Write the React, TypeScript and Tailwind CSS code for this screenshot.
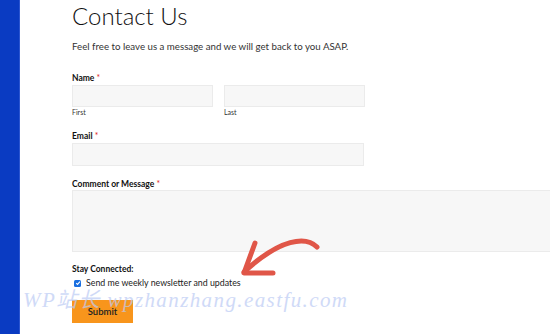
import React from 'react'

const font = { fontFamily: 'Lato, "Open Sans", "Liberation Sans", sans-serif' }

const Label = ({ text, req }: { text: string; req?: boolean }) => (
  <div className="text-[8.5px] font-bold text-[#111] leading-[12px]">
    {text}
    {req && <span className="text-[#e02424] font-normal"> *</span>}
  </div>
)

const Box = ({ w, h }: { w: string; h: string }) => (
  <div className={`${w} ${h} bg-[#f7f7f7] border border-[#ebebeb]`} />
)

const Arrow = () => (
  <svg className="absolute left-[236px] top-[232px]" width="90" height="48" viewBox="0 0 90 48" fill="none">
    <path d="M81 15 C 70 4, 45 6, 8 40" stroke="#e05648" strokeWidth="5" strokeLinecap="round" />
    <path d="M19 11 L 8 41 L 37 41" stroke="#e05648" strokeWidth="5" strokeLinecap="round" strokeLinejoin="round" />
  </svg>
)

export default function App() {
  return (
    <div className="relative flex w-[550px] h-[334px] overflow-hidden bg-white" style={font}>
      <div className="w-[20px] shrink-0 bg-[#0a3bc2] border-r border-[#2b55d0]" />
      <div className="flex flex-col pl-[52px] text-[#222]">
        <h1 className="text-[24px] leading-[30px] mt-[1px] font-light text-[#111]">Contact Us</h1>
        <p className="text-[9.7px] mt-[9px] leading-[12px] text-[#333]">
          Feel free to leave us a message and we will get back to you ASAP.
        </p>

        <div className="mt-[20px]">
          <Label text="Name" req />
          <div className="flex gap-[11px] mt-[1px]">
            <div>
              <Box w="w-[141px]" h="h-[22px]" />
              <div className="text-[7px] mt-[1px] leading-[9px] text-[#333]">First</div>
            </div>
            <div>
              <Box w="w-[141px]" h="h-[22px]" />
              <div className="text-[7px] mt-[1px] leading-[9px] text-[#333]">Last</div>
            </div>
          </div>
        </div>

        <div className="mt-[13px]">
          <Label text="Email" req />
          <div className="mt-[1px]">
            <Box w="w-[292px]" h="h-[23px]" />
          </div>
        </div>

        <div className="mt-[12px]">
          <Label text="Comment or Message" req />
          <Box w="w-[500px]" h="h-[62px]" />
        </div>

        <div className="mt-[11px]">
          <Label text="Stay Connected:" />
          <label className="flex items-center gap-[5px] mt-[2px] ml-[2px] text-[8.8px] leading-[12px] text-[#222]">
            <span className="w-[7px] h-[7px] rounded-[1.5px] bg-[#1a6fe0] flex items-center justify-center">
              <svg width="6" height="6" viewBox="0 0 10 10" fill="none">
                <path d="M2 5.2 L4.2 7.4 L8.2 2.6" stroke="white" strokeWidth="1.8" />
              </svg>
            </span>
            Send me weekly newsletter and updates
          </label>
        </div>

        <button className="mt-[11px] w-[61px] h-[23px] pt-[2px] bg-[#f8951c] text-[9.5px] text-[#222] font-semibold">
          Submit
        </button>
      </div>

      <Arrow />

      <div
        className="absolute left-[23px] top-[290px] text-[21px] leading-[21px] italic tracking-[1.4px] text-[#bccbf5] opacity-70 whitespace-nowrap pointer-events-none"
        style={{ fontFamily: '"Liberation Serif", "Noto Sans CJK SC", serif' }}
      >
        WP站长 wpzhanzhang.eastfu.com
      </div>
    </div>
  )
}
